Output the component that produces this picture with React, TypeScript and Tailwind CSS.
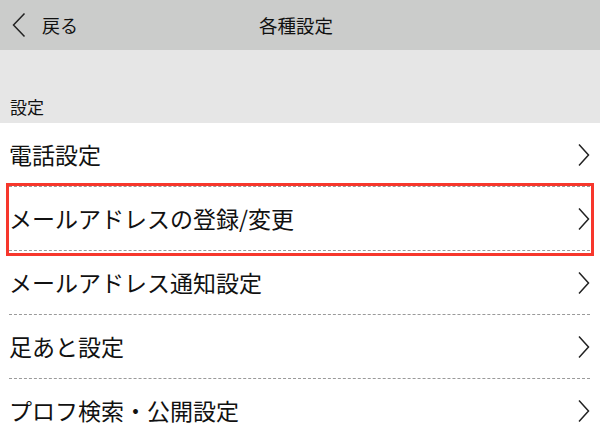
import React from "react";

const rows = [
  "電話設定",
  "メールアドレスの登録/変更",
  "メールアドレス通知設定",
  "足あと設定",
  "プロフ検索・公開設定",
];

function Chevron() {
  return (
    <svg width="12" height="24" viewBox="0 0 12 24" className="shrink-0">
      <path d="M1 1.5 L10.5 12 L1 22.5" fill="none" stroke="#222" strokeWidth="1.5" />
    </svg>
  );
}

export default function App() {
  return (
    <div
      className="relative w-[600px] h-[440px] overflow-hidden bg-white text-[#111]"
      style={{ fontFamily: '"Noto Sans CJK JP", "Noto Sans", sans-serif' }}
    >
      <div className="h-[50px] bg-[#cbcccb] flex items-center relative">
        <div className="flex items-center pl-[12px]">
          <svg width="14" height="26" viewBox="0 0 14 26">
            <path d="M12.5 1.5 L1.5 13 L12.5 24.5" fill="none" stroke="#222" strokeWidth="1.5" />
          </svg>
          <span className="ml-[16px] text-[18px] leading-none">戻る</span>
        </div>
        <div className="absolute left-[259px] top-0 h-[50px] flex items-center text-[18.5px] leading-none">
          各種設定
        </div>
      </div>
      <div className="h-[73px] bg-[#e6e6e6] flex items-end pl-[10px] pb-[8px]">
        <span className="text-[17px] leading-none">設定</span>
      </div>
      <div>
        {rows.map((r) => (
          <div key={r} className="h-[64px] ml-[9px] mr-[10px] border-b border-dashed border-[#9a9a9a] flex items-center justify-between">
            <span className="text-[23px] leading-none">{r}</span>
            <Chevron />
          </div>
        ))}
      </div>
      <div className="absolute left-[6px] top-[183px] w-[588px] h-[73px] border-[3px] border-[#f7372c]" />
    </div>
  );
}
